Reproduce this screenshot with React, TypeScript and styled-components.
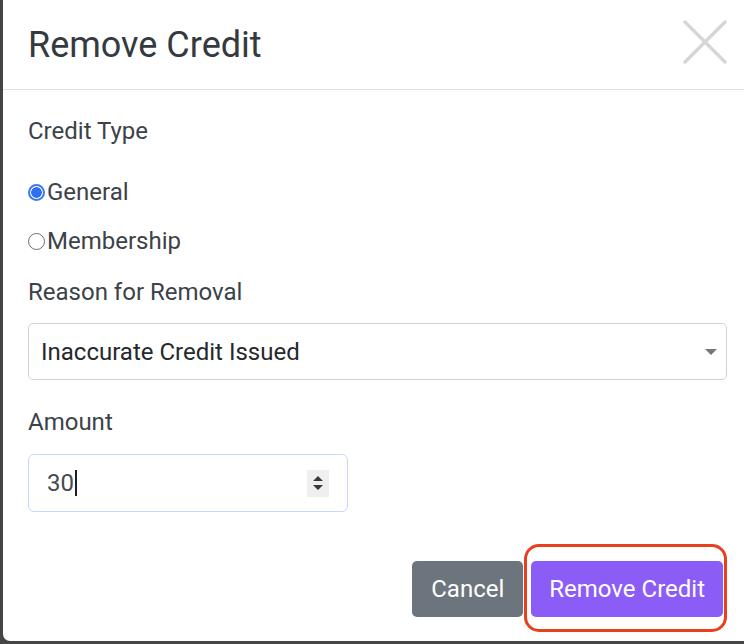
import React from 'react';
import styled, { createGlobalStyle } from 'styled-components';

const GlobalStyle = createGlobalStyle`
  html, body {
    margin: 0;
    padding: 0;
    background: #454545;
    overflow: hidden;
  }
  * { box-sizing: border-box; }
`;

const Backdrop = styled.div`
  width: 744px;
  height: 644px;
  padding: 0 0 3px 3px;
  background: #454545;
  display: flex;
  font-family: Roboto, "Liberation Sans", sans-serif;
`;

const Modal = styled.div`
  flex: 1;
  background: #fff;
  border-bottom-left-radius: 7px;
  display: flex;
  flex-direction: column;
`;

const Header = styled.div`
  height: 90px;
  border-bottom: 1px solid #dee2e6;
  display: flex;
  align-items: center;
  justify-content: space-between;
  padding: 0 17px 0 25px;
`;

const Title = styled.h1`
  margin: 0;
  font-size: 36px;
  font-weight: 400;
  color: #343a40;
  line-height: 42px;
  margin-top: 1px;
`;

const CloseButton = styled.button`
  width: 44px;
  height: 44px;
  padding: 0;
  border: none;
  background: none;
  display: flex;
  margin-top: -6px;
`;

const Body = styled.div`
  padding: 25px 17px 0 25px;
  display: flex;
  flex-direction: column;
`;

const Label = styled.div<{ $gap: number }>`
  font-size: 24px;
  line-height: 32px;
  color: #3c4249;
  margin-bottom: ${p => p.$gap}px;
`;

const RadioRow = styled.label<{ $gap: number }>`
  display: flex;
  align-items: center;
  font-size: 24px;
  line-height: 32px;
  color: #3c4249;
  margin-bottom: ${p => p.$gap}px;
`;

const RadioDot = styled.span<{ $checked?: boolean }>`
  width: 17px;
  height: 17px;
  border-radius: 50%;
  margin-right: 2px;
  flex-shrink: 0;
  border: ${p => (p.$checked ? '2px solid #3a78f5' : '1.5px solid #6e6e6e')};
  background: ${p => (p.$checked ? 'radial-gradient(circle, #2f6ff0 0 5px, #fff 5.6px)' : '#fff')};
`;

const Select = styled.div`
  height: 57px;
  border: 1px solid #ced4da;
  border-radius: 5px;
  display: flex;
  align-items: center;
  justify-content: space-between;
  padding: 0 9px 0 12px;
  font-size: 24px;
  color: #25292d;
  margin-bottom: 26px;
`;

const NumberInput = styled.div`
  width: 320px;
  height: 58px;
  border: 1px solid #c9d6fb;
  border-radius: 6px;
  display: flex;
  align-items: center;
  justify-content: space-between;
  padding: 0 18px 0 18px;
  font-size: 24px;
  color: #454b51;
`;

const Value = styled.span`
  display: flex;
  align-items: center;
`;

const Caret = styled.span`
  width: 2px;
  height: 26px;
  background: #1e1e1e;
  margin-left: 1px;
`;

const Spinner = styled.span`
  width: 22px;
  height: 27px;
  background: #efefef;
  display: flex;
  align-items: center;
  justify-content: center;
`;

const Footer = styled.div`
  margin-top: 49px;
  padding-right: 4px;
  display: flex;
  justify-content: flex-end;
  gap: 8px;
`;

const Button = styled.button<{ $variant: 'secondary' | 'primary' }>`
  height: 56px;
  padding: 0 ${p => (p.$variant === 'primary' ? 18 : 19)}px;
  border: none;
  border-radius: 5px;
  font-family: Roboto, "Liberation Sans", sans-serif;
  font-size: 24px;
  color: #fff;
  background: ${p => (p.$variant === 'primary' ? '#8b5cf6' : '#6c757d')};
  position: relative;
`;

const Highlight = styled.span`
  position: absolute;
  left: -7px;
  top: -17px;
  right: -4px;
  bottom: -15px;
  border: 3px solid #e8401f;
  border-radius: 15px;
  pointer-events: none;
`;

export default function App() {
  return (
    <>
      <GlobalStyle />
      <Backdrop>
        <Modal>
          <Header>
            <Title>Remove Credit</Title>
            <CloseButton aria-label="Close">
              <svg width="44" height="44" viewBox="0 0 44 44">
                <path d="M2 2 L42 42 M42 2 L2 42" stroke="#d6d6d6" strokeWidth="3.5" strokeLinecap="round" />
              </svg>
            </CloseButton>
          </Header>
          <Body>
            <Label $gap={29}>Credit Type</Label>
            <RadioRow $gap={17}>
              <RadioDot $checked />
              General
            </RadioRow>
            <RadioRow $gap={19}>
              <RadioDot />
              Membership
            </RadioRow>
            <Label $gap={15}>Reason for Removal</Label>
            <Select>
              <span>Inaccurate Credit Issued</span>
              <svg width="12" height="6" viewBox="0 0 12 6">
                <path d="M0 0 H12 L6 6 Z" fill="#767676" />
              </svg>
            </Select>
            <Label $gap={16}>Amount</Label>
            <NumberInput>
              <Value>
                30
                <Caret />
              </Value>
              <Spinner>
                <svg width="12" height="18" viewBox="0 0 12 18">
                  <path d="M1 7 L6 2 L11 7 Z M1 11 L11 11 L6 16 Z" fill="#3a3a3a" />
                </svg>
              </Spinner>
            </NumberInput>
            <Footer>
              <Button $variant="secondary">Cancel</Button>
              <Button $variant="primary">
                Remove Credit
                <Highlight />
              </Button>
            </Footer>
          </Body>
        </Modal>
      </Backdrop>
    </>
  );
}
